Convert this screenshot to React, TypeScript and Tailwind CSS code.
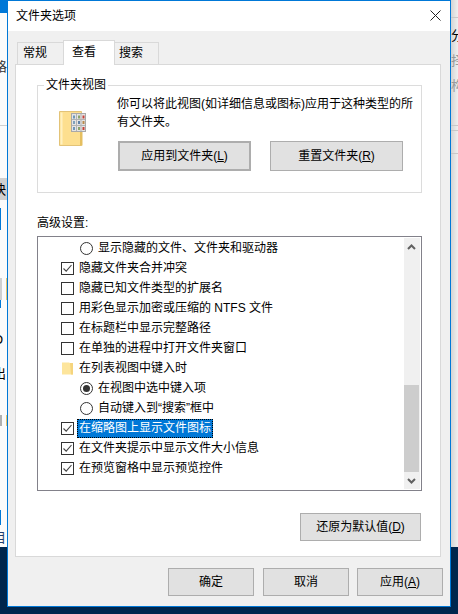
const font = "font-['Liberation_Sans','Noto_Sans_CJK_SC',sans-serif]"

type Row =
  | { kind: "check"; label: string; checked: boolean; selected?: boolean }
  | { kind: "radio"; label: string; checked: boolean }
  | { kind: "folder"; label: string }

const rows: Row[] = [
  { kind: "radio", label: "显示隐藏的文件、文件夹和驱动器", checked: false },
  { kind: "check", label: "隐藏文件夹合并冲突", checked: true },
  { kind: "check", label: "隐藏已知文件类型的扩展名", checked: false },
  { kind: "check", label: "用彩色显示加密或压缩的 NTFS 文件", checked: false },
  { kind: "check", label: "在标题栏中显示完整路径", checked: false },
  { kind: "check", label: "在单独的进程中打开文件夹窗口", checked: false },
  { kind: "folder", label: "在列表视图中键入时" },
  { kind: "radio", label: "在视图中选中键入项", checked: true },
  { kind: "radio", label: "自动键入到“搜索”框中", checked: false },
  { kind: "check", label: "在缩略图上显示文件图标", checked: true, selected: true },
  { kind: "check", label: "在文件夹提示中显示文件大小信息", checked: true },
  { kind: "check", label: "在预览窗格中显示预览控件", checked: true },
]

function Checkbox({ checked }: { checked: boolean }) {
  return (
    <span className="w-[13px] h-[13px] border border-[#333333] bg-white shrink-0 flex items-center justify-center">
      {checked && (
        <svg width="11" height="11" viewBox="0 0 11 11" fill="none">
          <path d="M1.5 5.5 L4.2 8.2 L9.5 2" stroke="#444444" strokeWidth="1.1" />
        </svg>
      )}
    </span>
  )
}

function Radio({ checked }: { checked: boolean }) {
  return (
    <span className="w-[13px] h-[13px] rounded-full border border-[#333333] bg-white shrink-0 flex items-center justify-center">
      {checked && <span className="w-[7px] h-[7px] rounded-full bg-[#333333]" />}
    </span>
  )
}

function FolderSmall() {
  return (
    <svg width="13" height="13" viewBox="0 0 13 13" className="shrink-0">
      <path d="M1 0.5 H8 L12 2.5 V12.5 H1 Z" fill="#fde59c" />
      <path d="M9 1 H12 V12.5 H10 Z" fill="#f5d47d" />
    </svg>
  )
}

function FolderView() {
  return (
    <svg width="28" height="35" viewBox="0 0 28 35" className="shrink-0">
      <path d="M0.5 0.5 H22.5 V34.5 H0.5 Z" fill="#fddf8f" stroke="#e3c377" />
      <path d="M1.5 1.5 H3.5 V33.5 H1.5 Z" fill="#fff0c0" />
      <path d="M21 20 H23.5 V34.5 H21 Z" fill="#e5bf60" />
      <rect x="12.5" y="2.5" width="14" height="18" fill="#e4e4e4" stroke="#a9a9a9" />
      <path d="M17.5 3 V20 M22 3 V20 M13 8.5 H26 M13 14.5 H26" stroke="#b3b3b3" />
      <rect x="14" y="4.5" width="2" height="3" fill="#6f97b8" />
      <rect x="19" y="4.5" width="2" height="3" fill="#8aa36b" />
      <rect x="23.5" y="4.5" width="2" height="3" fill="#c8423a" />
      <rect x="14" y="10" width="2" height="3" fill="#7fa1bb" />
      <rect x="19" y="10" width="2" height="3" fill="#5f83a8" />
      <rect x="23.5" y="10" width="2" height="3" fill="#b98a4c" />
      <rect x="14" y="16" width="2" height="3" fill="#6f97b8" />
      <rect x="19" y="16" width="2" height="3" fill="#8aa36b" />
      <rect x="23.5" y="16" width="2" height="3" fill="#c8423a" />
    </svg>
  )
}

function Btn({ label, hot, className }: { label: string; hot?: string; className: string }) {
  return (
    <button className={`flex items-center justify-center bg-[#e1e1e1] border-[#adadad] text-[12px] text-black ${className}`}>
      {label}
      {hot && (
        <span>
          (<span className="underline">{hot}</span>)
        </span>
      )}
    </button>
  )
}

function ListRow({ row }: { row: Row }) {
  const indent = row.kind === "radio" ? "pl-[42px]" : "pl-[23px]"
  const selected = row.kind === "check" && row.selected
  return (
    <div className={`h-5 flex items-center gap-[5px] ${indent}`}>
      {row.kind === "check" && <Checkbox checked={row.checked} />}
      {row.kind === "radio" && <Radio checked={row.checked} />}
      {row.kind === "folder" && <FolderSmall />}
      <span
        className={
          selected
            ? "h-[19px] -mx-[2px] px-[2px] flex items-center bg-[#0078d7] text-white outline-1 outline-dotted outline-black -outline-offset-1"
            : ""
        }
      >
        {row.label}
      </span>
    </div>
  )
}

export default function App() {
  return (
    <div className={`relative w-[458px] h-[614px] overflow-hidden bg-[#00264d] ${font}`}>
      {/* windows behind the dialog */}
      <div className="absolute left-0 top-0 w-[8px] h-[547px] overflow-hidden bg-[#fbfbfb] text-[13px] leading-none text-[#333333]">
        <div className="h-[13px] bg-[#0078d7]" />
        <div className="absolute top-[60px] -left-[6px]">格</div>
        <div className="absolute top-[125px] left-0 w-full h-px bg-[#d0d0d0]" />
        <div className="absolute top-[178px] left-0 w-full h-[22px] bg-[#d0d0d0]" />
        <div className="absolute top-[183px] -left-[7px] text-black">快</div>
        <div className="absolute top-[208px] left-0 w-px h-[22px] bg-[#0078d7]" />
        <div className="absolute top-[278px] left-0 w-[2px] h-[22px] bg-[#d0d0d0]" />
        <div className="absolute top-[278px] left-[6px] w-px h-[22px] bg-[#e8c66e]" />
        <div className="absolute top-[300px] left-0 w-px h-[8px] bg-[#0078d7]" />
        <div className="absolute top-[333px] -left-[7px] text-black">O</div>
        <div className="absolute top-[367px] -left-[7px] text-black">出</div>
        <div className="absolute top-[415px] left-0 w-[2px] h-[11px] bg-[#b0b0b0]" />
        <div className="absolute top-[415px] left-[6px] w-px h-[11px] bg-[#e8c66e]" />
        <div className="absolute top-[510px] left-0 w-px h-[15px] bg-[#0078d7]" />
        <div className="absolute top-[531px] -left-[7px] text-[#1f3f6e]">目</div>
      </div>
      <div className="absolute left-[451px] top-0 w-[7px] h-[547px] overflow-hidden bg-gradient-to-r from-[#d4d4d4] to-[#f0f0f0] text-[13px] leading-none text-[#999999]">
        <div className="absolute top-[17px] left-0 w-full h-px bg-[#c8c8c8]" />
        <div className="absolute top-[29px] left-0 text-black">分</div>
        <div className="absolute top-[54px] left-0">择</div>
        <div className="absolute top-[79px] left-0">构</div>
        <div className="absolute top-[125px] left-0 w-full h-px bg-[#c8c8c8]" />
        <div className="absolute top-[130px] left-0 w-full h-px bg-[#c8c8c8]" />
        <div className="absolute top-[153px] left-0 w-full h-px bg-[#c8c8c8]" />
      </div>

      {/* dialog */}
      <div className="absolute left-[7px] top-0 w-[444px] h-[607px] bg-[#f0f0f0] border border-[#0078d7] flex flex-col text-[12px] text-black">
        <div className="h-[30px] shrink-0 bg-white flex items-center justify-between pl-[8px] pr-[9px] pb-[1px]">
          <span>文件夹选项</span>
          <svg width="11" height="11" viewBox="0 0 11 11" fill="none">
            <path d="M0.5 0.5 L10.5 10.5 M10.5 0.5 L0.5 10.5" stroke="#222222" strokeWidth="1" />
          </svg>
        </div>

        <div className="flex flex-col pl-[7px] pr-[9px] pt-[9px]">
          <div className="flex items-start h-[25px] pl-[2px] -mb-px">
            <div className="w-[47px] h-[22px] mt-[2px] border border-[#d9d9d9] border-b-0 bg-[#f0f0f0] pl-[5px] pt-[2px] leading-4">常规</div>
            <div className="relative z-10 w-[52px] h-[25px] border border-[#d9d9d9] border-b-0 bg-white -mx-px pl-[8px] pt-[3px] leading-4">查看</div>
            <div className="w-[45px] h-[22px] mt-[2px] border border-[#d9d9d9] border-b-0 bg-[#f0f0f0] pl-[4px] pt-[2px] leading-4">搜索</div>
          </div>

          <div className="h-[493px] bg-white border border-[#d9d9d9] flex flex-col pl-[21px] pr-[18px] pt-[13px]">
            <fieldset className="h-[115px] border border-[#dcdcdc] flex px-[1px]">
              <legend className="ml-[5px] px-[2px] leading-[14px]">文件夹视图</legend>
              <div className="pl-[20px] pt-[19px] w-[78px] shrink-0">
                <FolderView />
              </div>
              <div className="flex flex-col">
                <p className="w-[300px] leading-[18px] pt-[3px]">你可以将此视图(如详细信息或图标)应用于这种类型的所有文件夹。</p>
                <div className="flex gap-[19px] mt-[10px] ml-[1px]">
                  <Btn label="应用到文件夹" hot="L" className="w-[133px] h-[30px] border-2 border-[#0078d7]" />
                  <Btn label="重置文件夹" hot="R" className="w-[133px] h-[30px] border" />
                </div>
              </div>
            </fieldset>

            <div className="mt-[22px] leading-[17px] h-[21px]">高级设置:</div>

            <div className="h-[255px] border border-[#82818a] flex">
              <div className="flex-1 pt-[1px]">
                {rows.map((row) => (
                  <ListRow key={row.label} row={row} />
                ))}
              </div>
              <div className="w-4 bg-[#f0f0f0] flex flex-col mr-[1px] my-[1px]">
                <div className="h-[17px] w-[15px] flex items-center justify-center">
                  <svg width="9" height="6" viewBox="0 0 9 6" fill="none">
                    <path d="M1 5 L4.5 1.5 L8 5" stroke="#606060" strokeWidth="2" />
                  </svg>
                </div>
                <div className="flex-1 flex flex-col justify-end">
                  <div className="h-[87px] w-[15px] bg-[#cdcdcd]" />
                </div>
                <div className="h-[17px] w-[15px] flex items-center justify-center">
                  <svg width="9" height="6" viewBox="0 0 9 6" fill="none">
                    <path d="M1 1 L4.5 4.5 L8 1" stroke="#606060" strokeWidth="2" />
                  </svg>
                </div>
              </div>
            </div>

            <div className="flex justify-end mt-[22px] mr-[1px]">
              <Btn label="还原为默认值" hot="D" className="w-[121px] h-[28px] border" />
            </div>
          </div>

          <div className="flex justify-end mt-[11px] -mr-[2px]">
            <Btn label="确定" className="w-[86px] h-[28px] border mr-[9px]" />
            <Btn label="取消" className="w-[86px] h-[28px] border mr-[8px]" />
            <Btn label="应用" hot="A" className="w-[86px] h-[28px] border" />
          </div>
        </div>
      </div>
    </div>
  )
}
